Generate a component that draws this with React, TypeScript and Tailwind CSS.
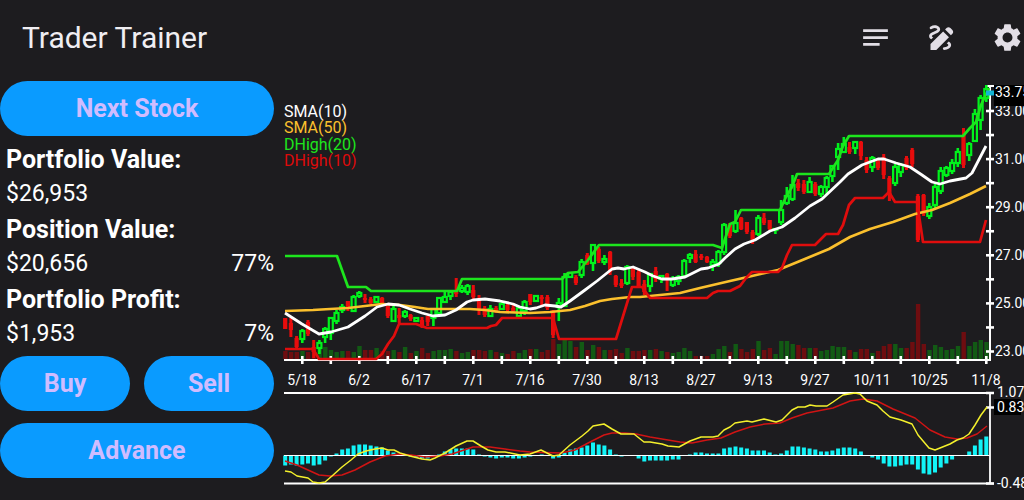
import type { ReactNode } from 'react';
import { MdDraw, MdNotes, MdSettings } from 'react-icons/md';

type Candle = [dir: 'u' | 'd', high: number, top: number, bottom: number, low: number];

// One entry per trading day, in chart units
const CANDLES: Candle[] = [
  ['d', 318, 318, 329, 329], ['d', 318, 323, 330, 337], ['d', 336, 338, 347, 348], ['u', 329, 331, 339, 343],
  ['d', 320, 322, 334, 336], ['d', 340, 347, 352, 358], ['u', 340, 343, 348, 354], ['u', 327, 329, 337, 343],
  ['u', 317, 318, 333, 340], ['u', 310, 313, 321, 324], ['u', 304, 307, 310, 313], ['d', 301, 301, 308, 311],
  ['u', 295, 297, 311, 312], ['u', 291, 293, 296, 298], ['d', 294, 298, 300, 303], ['d', 297, 299, 303, 304],
  ['u', 297, 297, 302, 303], ['d', 297, 298, 304, 305], ['d', 306, 306, 316, 318], ['u', 306, 309, 321, 322],
  ['d', 308, 315, 318, 323], ['u', 310, 312, 316, 318], ['d', 314, 315, 319, 321], ['u', 317, 318, 321, 322],
  ['d', 317, 320, 327, 328], ['d', 316, 316, 322, 326], ['u', 308, 309, 318, 326], ['u', 297, 298, 313, 315],
  ['u', 292, 297, 302, 303], ['u', 290, 292, 296, 300], ['d', 278, 290, 294, 297], ['u', 285, 288, 291, 293],
  ['u', 284, 286, 292, 295], ['d', 285, 290, 297, 300], ['d', 295, 300, 310, 315], ['d', 306, 308, 315, 317],
  ['u', 305, 309, 316, 317], ['d', 306, 308, 312, 313], ['u', 301, 304, 309, 310], ['d', 303, 305, 310, 311],
  ['d', 303, 308, 311, 313], ['u', 307, 308, 316, 317], ['u', 300, 302, 311, 315], ['d', 294, 294, 302, 305],
  ['u', 295, 296, 301, 301], ['d', 295, 297, 299, 305], ['d', 295, 297, 308, 310], ['d', 310, 312, 335, 338],
  ['u', 298, 303, 307, 321], ['u', 273, 277, 306, 307], ['u', 272, 273, 277, 278], ['d', 275, 277, 283, 285],
  ['u', 259, 262, 275, 278], ['d', 253, 255, 264, 265], ['u', 244, 245, 263, 271], ['d', 247, 249, 261, 263],
  ['u', 255, 259, 262, 265], ['d', 251, 252, 272, 275], ['d', 275, 276, 285, 287], ['d', 279, 283, 286, 288],
  ['u', 265, 267, 283, 285], ['d', 267, 268, 277, 280], ['d', 270, 272, 286, 287], ['d', 280, 284, 292, 295],
  ['u', 273, 274, 286, 292], ['d', 267, 271, 279, 282], ['u', 275, 276, 279, 283], ['d', 273, 274, 279, 291],
  ['u', 276, 279, 285, 287], ['u', 275, 277, 281, 285], ['u', 259, 261, 276, 277], ['u', 253, 255, 258, 263],
  ['d', 250, 254, 262, 263], ['d', 254, 256, 258, 260], ['d', 256, 257, 262, 263], ['u', 259, 262, 265, 271],
  ['u', 250, 252, 263, 267], ['u', 223, 225, 252, 255], ['d', 223, 225, 236, 238], ['u', 210, 223, 231, 233],
  ['d', 217, 218, 229, 230], ['d', 222, 222, 232, 234], ['d', 230, 232, 240, 244], ['u', 215, 218, 234, 236],
  ['d', 213, 218, 223, 225], ['d', 220, 220, 229, 230], ['u', 228, 229, 230, 234], ['u', 200, 210, 222, 225],
  ['u', 187, 196, 203, 205], ['u', 175, 185, 199, 201], ['d', 179, 183, 188, 191], ['d', 180, 184, 192, 194],
  ['u', 177, 182, 192, 193], ['d', 182, 184, 194, 196], ['u', 185, 187, 194, 197], ['u', 176, 178, 187, 195],
  ['u', 165, 166, 176, 182], ['u', 143, 149, 157, 170], ['u', 137, 144, 152, 153], ['d', 142, 147, 152, 154],
  ['u', 142, 142, 148, 154], ['d', 141, 142, 156, 160], ['d', 157, 160, 170, 173], ['u', 156, 158, 167, 172],
  ['d', 160, 161, 168, 170], ['d', 154, 157, 175, 179], ['d', 176, 178, 195, 201], ['u', 164, 167, 183, 186],
  ['u', 163, 165, 172, 177], ['d', 156, 158, 168, 170], ['d', 148, 150, 164, 167], ['d', 194, 196, 240, 242],
  ['d', 194, 195, 214, 216], ['u', 203, 207, 216, 219], ['u', 184, 187, 205, 208], ['u', 167, 171, 191, 194],
  ['u', 166, 168, 175, 177], ['u', 159, 163, 171, 174], ['u', 148, 152, 163, 167], ['d', 128, 135, 165, 168],
  ['u', 142, 144, 155, 161], ['u', 109, 114, 141, 142], ['u', 95, 98, 120, 130], ['u', 85, 89, 98, 102],
];

const VOLUMES = [
  8, 7, 7, 8, 7, 9, 10, 12, 9, 7, 8, 8, 7, 13, 9, 9, 11, 8, 8, 9, 7, 12, 6, 8, 11, 6, 8, 9, 9, 10, 8, 6,
  7, 9, 9, 8, 9, 7, 6, 5, 8, 6, 9, 10, 10, 7, 9, 20, 15, 19, 18, 12, 17, 9, 14, 12, 9, 9, 10, 6, 11, 8, 8, 9,
  9, 10, 8, 7, 6, 7, 11, 8, 3, 3, 3, 5, 10, 13, 7, 15, 10, 7, 10, 18, 9, 11, 5, 18, 18, 15, 14, 11, 11, 11, 8, 9,
  13, 12, 12, 9, 7, 10, 10, 6, 8, 13, 15, 15, 11, 11, 17, 55, 15, 9, 14, 12, 9, 10, 13, 27, 13, 17, 19, 17,
];

const HISTOGRAM = [
  -10, -9, -10, -9, -8, -10, -9, -5, -1, 2, 6, 7, 10, 11, 11, 10, 9, 8, 5, 3, 1, 0, -1, -2, -3, -3, -1, 1, 4, 6, 7, 7,
  7, 6, 1, -1, -2, -3, -2, -2, -3, -3, -2, -1, 0, 1, 0, -3, -2, 3, 6, 7, 8, 10, 13, 11, 10, 6, 1, -1, 0, 0, -3, -6,
  -5, -5, -5, -5, -4, -4, 0, 1, 3, 3, 2, 2, 2, 7, 8, 9, 8, 7, 5, 5, 5, 3, 1, 2, 5, 9, 9, 8, 7, 6, 4, 4,
  5, 7, 8, 8, 7, 4, 0, -2, -4, -8, -11, -11, -10, -9, -9, -14, -18, -19, -17, -12, -8, -4, 0, 0, 4, 10, 16, 19,
];

const DHIGH_20 =
  '285,256 337,256 348,287 366,287 371,291 457,291 462,279 562,279 568,273 578,272 588,260 599,245 713,245 722,248 730,224 735,222 741,210 780,210 786,197 792,187 797,174 829,174 838,160 843,146 849,136 963,136 970,128 976,122 981,105 989,88';
const DHIGH_10 =
  '285,349 313,349 319,359 376,359 382,354 388,344 394,336 399,324 416,324 427,328 487,328 491,326 496,325 502,318 553,318 559,339 616,339 632,287 642,287 650,298 707,298 713,293 718,291 730,291 740,286 746,278 752,272 778,272 782,268 787,255 792,245 815,245 821,239 826,234 838,234 843,225 849,205 855,198 883,198 889,192 895,202 917,202 923,242 980,242 986,220';
const SMA_10 =
  '285,313 302,324 319,334 331,332 348,327 365,316 377,307 388,304 399,305 410,309 422,313 433,316 445,315 456,310 467,302 473,300 485,299 500,301 513,304 520,307 530,309 536,308 545,305 555,306 561,307 570,301 585,290 597,281 612,269 618,268 624,269 633,267 645,272 653,276 662,279 672,279 685,277 701,269 708,268 719,264 725,258 735,249 744,244 755,240 770,231 782,227 795,218 810,206 822,199 840,182 848,174 862,165 878,159 884,159 896,163 910,167 922,175 932,182 940,184 950,181 966,178 972,173 986,146';
const SMA_50 =
  '285,311 313,310 330,309 348,308 365,306 382,304 400,305 415,307 428,309 470,309 485,310 500,312 530,313 550,312 570,310 585,306 600,301 612,299 630,297 640,297 660,295 680,293 700,288 730,281 752,276 778,270 800,261 829,249 850,237 870,229 893,222 915,214 932,210 950,203 970,194 986,186';
const MACD =
  '285,471 291,472 297,476 308,478 313,482 319,483 325,482 332,476 342,467 351,460 358,454 366,451 375,449 382,448 388,450 394,450 400,453 410,456 422,459 430,460 435,458 445,453 456,446 467,441 473,441 481,446 488,450 496,452 505,452 520,455 530,454 541,450 547,453 553,456 559,455 570,445 582,436 588,431 593,426 604,424 612,429 621,434 634,434 644,442 650,442 662,444 668,446 679,447 690,441 701,437 713,437 718,436 724,430 730,427 735,423 747,421 752,422 764,419 776,422 782,420 787,415 792,410 798,407 805,407 810,405 816,406 827,406 833,402 843,395 855,393 860,394 867,401 877,405 883,411 890,417 901,420 912,424 918,435 929,448 935,450 950,444 957,440 963,438 969,434 975,425 981,415 987,407';
const SIGNAL =
  '285,461 297,465 308,470 319,475 330,476 342,475 355,470 370,462 385,456 399,454 411,455 425,457 440,456 452,454 464,450 473,447 490,447 505,449 520,451 530,452 561,453 575,450 590,442 604,435 612,433 625,433 636,434 650,437 680,442 692,443 707,440 721,438 735,432 750,427 765,424 780,423 792,418 807,413 833,408 850,401 863,399 877,401 893,409 915,418 930,430 945,437 957,439 967,438 977,434 987,426';

const DATES = ['5/18', '6/2', '6/17', '7/1', '7/16', '7/30', '8/13', '8/27', '9/13', '9/27', '10/11', '10/25', '11/8'];
const PRICES = ['33.00', '31.00', '29.00', '27.00', '25.00', '23.00'];

const LEGEND = [
  { label: 'SMA(10)', color: '#ffffff' },
  { label: 'SMA(50)', color: '#fbc02d' },
  { label: 'DHigh(20)', color: '#1de51d' },
  { label: 'DHigh(10)', color: '#dd0a0a' },
];

const dayX = (i: number) => 285.2 + i * 5.7;

function PriceChart() {
  return (
    <g>
      {/* Volume */}
      {VOLUMES.map((v, i) => (
        <rect key={i} x={dayX(i) - 2} y={359 - v} width="4.4" height={v} fill={CANDLES[i][0] === 'u' ? '#125a14' : '#6e0d10'} />
      ))}

      {/* Axes */}
      <g stroke="#ffffff" strokeWidth="2">
        <path d="M284 360H991M990 85V361" fill="none" />
        {Array.from({ length: 25 }, (_, i) => (
          <path key={i} d={`M${302.3 + i * 28.5} 356v8`} strokeWidth="2.6" />
        ))}
        <path d="M986 86h8" />
        {Array.from({ length: 11 }, (_, i) => (
          <path key={i} d={`M986 ${111 + i * 24.05}h8`} strokeWidth="2.6" />
        ))}
      </g>

      {/* Candles */}
      {CANDLES.map(([dir, high, top, bottom, low], i) => {
        const x = dayX(i);
        return dir === 'u' ? (
          <g key={i} stroke="#00f21c" strokeWidth="2.2" fill="none">
            <path d={`M${x} ${high}V${top}M${x} ${bottom}V${low}`} strokeWidth="2.6" />
            <rect x={x - 2} y={top} width="4" height={bottom - top} />
          </g>
        ) : (
          <g key={i} fill="#e80c0c">
            <rect x={x - 1.5} y={high} width="3" height={low - high} />
            <rect x={x - 2.1} y={top} width="4.2" height={bottom - top} />
          </g>
        );
      })}

      {/* Indicators */}
      <g fill="none" strokeWidth="2.7" strokeLinejoin="round">
        <polyline points={SMA_50} stroke="#fbc02d" />
        <polyline points={DHIGH_20} stroke="#1de51d" />
        <polyline points={DHIGH_10} stroke="#e00d0d" />
        <polyline points={SMA_10} stroke="#ffffff" strokeWidth="2.8" />
      </g>

      {/* Labels */}
      <g fill="#ffffff" fontSize="14">
        {DATES.map((date, i) => (
          <text key={date} x={302 + i * 57} y="385" textAnchor="middle">{date}</text>
        ))}
        {PRICES.map((price, i) => (
          <text key={price} x="995" y={116 + i * 48}>{price}</text>
        ))}
        <rect x="994" y="85" width="30" height="21" fill="#000000" />
        <path d="M986 93h8" stroke="#12b5d6" strokeWidth="5" />
        <text x="995" y="97">33.75</text>
      </g>
      <g fontSize="16">
        {LEGEND.map(({ label, color }, i) => (
          <text key={label} x="284" y={117 + Math.floor(i * 16.5)} fill={color}>{label}</text>
        ))}
      </g>
    </g>
  );
}

function MacdChart() {
  return (
    <g>
      {HISTOGRAM.map((v, i) => (
        <rect key={i} x={dayX(i) - 2} y={v > 0 ? 455.5 - v : 455.5} width="4" height={Math.abs(v)} fill="#12f3f7" />
      ))}
      <g stroke="#ffffff" fill="none">
        <path d="M284 393H994M284 483.5H994M990 393V484" strokeWidth="1.8" />
        <path d="M284 455.5H990" strokeWidth="1.2" />
        <path d="M986 393h8M986 407.5h8M986 483.5h8" strokeWidth="2.6" />
      </g>
      <g fill="none" strokeWidth="1.5" strokeLinejoin="round">
        <polyline points={SIGNAL} stroke="#d01414" />
        <polyline points={MACD} stroke="#f4f02c" />
      </g>
      <g fill="#ffffff" fontSize="14">
        <rect x="994" y="399" width="27" height="16" fill="#000000" />
        <text x="997" y="397">1.07</text>
        <text x="997" y="412">0.83</text>
        <text x="997" y="488">-0.48</text>
      </g>
    </g>
  );
}

function ActionButton({ children }: { children: ReactNode }) {
  return (
    <button type="button" className="h-[55px] w-full rounded-full bg-[#0a9bff] text-[25px] font-bold text-[#d0bcff]">
      {children}
    </button>
  );
}

function Stat({ label, value, percent }: { label: string; value: string; percent?: string }) {
  return (
    <div>
      <dt className="text-[25px] leading-[34px] font-bold">{label}</dt>
      <dd className="flex justify-between text-[23px] leading-[34px]">
        <span>{value}</span>
        {percent && <span>{percent}</span>}
      </dd>
    </div>
  );
}

export default function App() {
  return (
    <div className="min-h-screen overflow-hidden bg-[#1d1c1f] font-[Roboto,sans-serif] text-white">
      <header className="flex h-20 items-center justify-between pl-[22px] pb-1.5">
        <h1 className="text-[30px] text-[#f0eef2]">Trader Trainer</h1>
        <div className="flex gap-[33px] text-[33px] text-[#e2dee6]">
          <button type="button" aria-label="Details"><MdNotes /></button>
          <button type="button" aria-label="Draw"><MdDraw /></button>
          <button type="button" aria-label="Settings"><MdSettings /></button>
        </div>
      </header>

      <main className="flex items-start gap-1.5">
        <section className="w-[274px] shrink-0 pt-px">
          <ActionButton>Next Stock</ActionButton>
          <dl className="space-y-0.5 pt-[7px] pb-[5px] pl-1.5">
            <Stat label="Portfolio Value:" value="$26,953" />
            <Stat label="Position Value:" value="$20,656" percent="77%" />
            <Stat label="Portfolio Profit:" value="$1,953" percent="7%" />
          </dl>
          <div className="mb-3 grid grid-cols-2 gap-3.5">
            <ActionButton>Buy</ActionButton>
            <ActionButton>Sell</ActionButton>
          </div>
          <ActionButton>Advance</ActionButton>
        </section>

        <svg viewBox="280 80 744 420" className="min-w-0 flex-1" role="img">
          <PriceChart />
          <MacdChart />
        </svg>
      </main>
    </div>
  );
}
